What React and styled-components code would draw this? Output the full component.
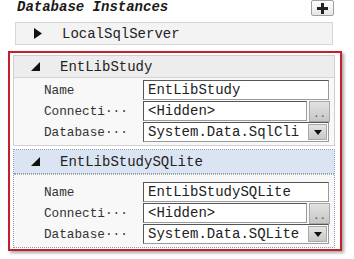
import React from "react";
import styled, { createGlobalStyle } from "styled-components";

const GlobalStyle = createGlobalStyle`
  html, body {
    margin: 0;
    padding: 0;
    background: #ffffff;
  }
  body {
    font-family: "Liberation Mono", "Courier New", monospace;
    color: #222;
  }
`;

const instances = [
  { name: "EntLibStudy", provider: "System.Data.SqlCli", selected: false },
  { name: "EntLibStudySQLite", provider: "System.Data.SQLite", selected: true },
];

function App() {
  return (
    <Page>
      <GlobalStyle />
      <TopBar>
        <Title>Database Instances</Title>
        <AddButton>
          <svg width="13" height="13" viewBox="0 0 13 13">
            <path d="M5 1h3v4h4v3H8v4H5V8H1V5h4z" fill="#222" />
          </svg>
        </AddButton>
      </TopBar>

      <CollapsedRow>
        <Arrow>
          <svg width="10" height="11" viewBox="0 0 10 11">
            <path d="M1 0L9 5.5L1 11z" fill="#111" />
          </svg>
        </Arrow>
        LocalSqlServer
      </CollapsedRow>

      <Frame>
        {instances.map((inst) => (
          <Panel key={inst.name} $selected={inst.selected}>
            <PanelHeader $selected={inst.selected}>
              <Arrow>
                <svg width="9" height="9" viewBox="0 0 9 9">
                  <path d="M9 0V9H0z" fill="#111" />
                </svg>
              </Arrow>
              {inst.name}
            </PanelHeader>
            <PanelBody $selected={inst.selected}>
              <Row>
                <Label>Name</Label>
                <Field>{inst.name}</Field>
              </Row>
              <Row>
                <Label>Connecti···</Label>
                <Field $short>&lt;Hidden&gt;</Field>
                <DotsButton>..</DotsButton>
              </Row>
              <Row>
                <Label>Database···</Label>
                <Field>
                  <span>{inst.provider}</span>
                  <DropButton>
                    <svg width="8" height="5" viewBox="0 0 8 5">
                      <path d="M0 0H8L4 5z" fill="#111" />
                    </svg>
                  </DropButton>
                </Field>
              </Row>
            </PanelBody>
          </Panel>
        ))}
      </Frame>
    </Page>
  );
}

const Page = styled.div`
  width: 354px;
  height: 259px;
  overflow: hidden;
`;

const TopBar = styled.div`
  display: flex;
  align-items: center;
  justify-content: space-between;
  height: 17px;
  padding: 0 20px 0 17px;
`;

const Title = styled.div`
  font-family: "Liberation Mono", "Courier New", monospace;
  font-weight: bold;
  font-style: italic;
  font-size: 14px;
  color: #1a1a1a;
  margin-top: -3px;
`;

const AddButton = styled.div`
  width: 23px;
  height: 16px;
  box-sizing: border-box;
  margin-top: -1px;
  border: 1px solid #a0a0a0;
  border-radius: 2px;
  background: linear-gradient(#ffffff, #e6e6e6);
  display: flex;
  align-items: center;
  justify-content: center;
`;

const CollapsedRow = styled.div`
  display: flex;
  align-items: center;
  margin: 5px 0 0 15px;
  width: 318px;
  height: 23px;
  box-sizing: border-box;
  border: 1px solid #d6d6d6;
  background: #f3f3f3;
  font-size: 14px;
  color: #222;
`;

const Arrow = styled.span`
  display: flex;
  align-items: center;
  justify-content: flex-start;
  width: 28px;
  margin-left: 17px;
  margin-right: 1px;
`;

const Frame = styled.div`
  margin: 6px 0 0 8px;
  width: 334px;
  height: 200px;
  box-sizing: border-box;
  border: 2px solid #c4202c;
  padding: 2px 5px 0 3px;
  display: flex;
  flex-direction: column;
  gap: 3px;
  box-shadow: 2px 2px 3px rgba(0, 0, 0, 0.35);
`;

const Panel = styled.div`
  border: 1px ${(p) => (p.$selected ? "dotted #8a9bb8" : "solid #cfcfcf")};
  background: #f8f8f8;
`;

const PanelHeader = styled.div`
  display: flex;
  align-items: center;
  height: ${(p) => (p.$selected ? "23px" : "21px")};
  background: ${(p) => (p.$selected ? "#dbe4f3" : "#ededed")};
  border-bottom: 1px ${(p) => (p.$selected ? "dotted #8a9bb8" : "solid #d4d4d4")};
  font-size: 14px;
  color: #222;
`;

const PanelBody = styled.div`
  padding: ${(p) => (p.$selected ? "7px 0 3px" : "2px 0 3px")};
  display: flex;
  flex-direction: column;
  gap: 1px;
  ${(p) => p.$selected && "border-top: 1px dotted #a7b69a;"}
`;

const Row = styled.div`
  display: flex;
  align-items: center;
  height: 20px;
`;

const Label = styled.div`
  width: 129px;
  padding-left: 30px;
  box-sizing: border-box;
  font-size: 12.7px;
  color: #333;
  white-space: nowrap;
  flex-shrink: 0;
`;

const Field = styled.div`
  display: flex;
  align-items: center;
  justify-content: space-between;
  width: ${(p) => (p.$short ? "164px" : "186px")};
  height: 20px;
  box-sizing: border-box;
  padding: 0 1px 0 4px;
  border: 1px solid #9a9a9a;
  border-top-color: #555;
  border-left-color: #555;
  background: #ffffff;
  font-size: 14px;
  color: #222;
  white-space: nowrap;
  overflow: hidden;
`;

const DotsButton = styled.div`
  width: 21px;
  height: 21px;
  margin-left: 2px;
  box-sizing: border-box;
  border: 1px solid #a8a8a8;
  background: linear-gradient(#e2e2e2, #c6c6c6);
  font-size: 11px;
  color: #555;
  display: flex;
  align-items: flex-end;
  justify-content: center;
  line-height: 14px;
`;

const DropButton = styled.div`
  width: 19px;
  height: 16px;
  flex-shrink: 0;
  box-sizing: border-box;
  border: 1px solid #a8a8a8;
  background: linear-gradient(#e4e4e4, #c8c8c8);
  display: flex;
  align-items: center;
  justify-content: center;
`;

export default App;
